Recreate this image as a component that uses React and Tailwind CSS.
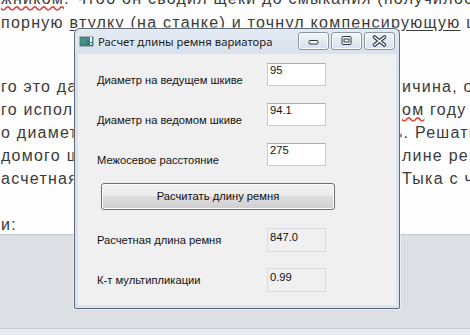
import React from "react";

const PageLine = ({ left, right, rightShift = "" }) => (
  <div className="flex h-[23px] leading-[23px] whitespace-nowrap">
    <div className="w-[401px] shrink-0 overflow-hidden">{left}</div>
    <div className={`shrink-0 ${rightShift}`}>{right}</div>
  </div>
);

const TitleButton = ({ children }) => (
  <div className="w-[31px] h-[18px] rounded-[3px] border border-[#8b97a6] bg-[linear-gradient(to_bottom,#f5f8fb,#e4eaf1_50%,#d8e0ea)] shadow-[inset_0_0_0_1px_#fbfcfe] flex items-center justify-center">
    <svg width="29" height="16" viewBox="0 0 29 16">
      {children}
    </svg>
  </div>
);

const Field = ({ label, value }) => (
  <div className="flex h-[23px]">
    <div className="w-[189px] pl-[19px] mt-[10px] leading-[14px]">{label}</div>
    <div className="w-[59px] h-[23px] bg-white border border-[#c9ccd1] border-t-[#abadb3] px-[2px] leading-[13px]">
      {value}
    </div>
  </div>
);

const Output = ({ label, value, className = "" }) => (
  <div className={`flex items-center h-[24px] ${className}`}>
    <div className="w-[189px] pl-[19px] leading-[14px]">{label}</div>
    <div className="w-[59px] h-[24px] bg-[#f0f0f0] border border-[#d9dcdf] px-[2px] pt-[2px] leading-[13px]">
      {value}
    </div>
  </div>
);

export default function App() {
  return (
    <div className="relative w-[470px] h-[335px] overflow-hidden bg-[#e9ecef]">
      {/* page text behind the window */}
      <div className="h-[235px] bg-[#fefefe] border-b border-[#c4c8cd] overflow-hidden font-['Liberation_Sans',Arial,sans-serif] text-[16px] tracking-[0.078em] text-[#3a3a3a]">
        <div className="-mt-[12px] pl-[1px]">
          <div className="h-[21px] leading-[21px] whitespace-nowrap">
            <span className="underline decoration-wavy decoration-[#e0403a]">жником</span>. Чтоб он сводил щеки до смыкания (получилось
          </div>
          <div className="mt-[3px] h-[21px] leading-[21px] whitespace-nowrap">
            порную <span className="underline underline-offset-2">втулку (на станке) и точнул компенсирующую</span> щеку
          </div>
        </div>
        <div className="mt-[42px] pl-[1px]">
          <PageLine left="го это даст нам и чем отличается величина" right="ичина, о" />
          <PageLine
            left="го используется на вариаторе в прошлом году"
            right={
              <>
                <span className="underline decoration-wavy decoration-[#e0403a]">ом</span> году п
              </>
            }
          />
          <PageLine left="о диаметру шкивов и длине ремня" right="ь. Решать" rightShift="-ml-[8px]" />
          <PageLine left="домого шкива по межосевому и длине" right="лине рем" />
          <PageLine left="асчетная длина ремня получилась" right="Тыка с ч" />
          <div className="h-[23px]" />
          <div className="h-[23px] leading-[23px]">и:</div>
        </div>
      </div>
      <div className="h-[94px] bg-[#dce0e5] border-b border-[#c3c7cc]" />

      {/* window */}
      <div className="absolute left-[74px] top-[28px] w-[326px] h-[281px] rounded-t-[6px] rounded-b-[2px] border border-[#5d6b7a] bg-[linear-gradient(to_bottom,#e3eaf2,#d7e1ec_30px,#dbe3ec)] flex flex-col shadow-[0_0_0_1px_rgba(255,255,255,0.4)]">
        <div className="h-[25px] flex items-start shrink-0">
          <div className="mt-[7px] ml-[4px]">
            <svg width="15" height="11" viewBox="0 0 15 11">
              <rect x="0.5" y="0.5" width="14" height="10" fill="#6b7885" />
              <rect x="1.5" y="1.5" width="12" height="8" fill="#2f8177" />
              <rect x="2" y="2" width="5" height="6" fill="#3f9a7c" />
              <rect x="7" y="2" width="5" height="3" fill="#4f7fa8" />
              <rect x="11" y="1" width="2" height="5" fill="#ffffff" />
              <rect x="11" y="7" width="2" height="1.5" fill="#ffffff" />
            </svg>
          </div>
          <div className="ml-[4px] mt-[4px] text-[11.3px] leading-[17px] text-[#1c1c1c] font-['Noto_Sans','Open_Sans',sans-serif]">
            Расчет длины ремня вариатора
          </div>
          <div className="ml-auto mr-[4px] mt-[3px] flex gap-[2px]">
            <TitleButton>
              <rect x="10" y="7.5" width="9" height="3.5" rx="1" fill="#ffffff" stroke="#2e3640" strokeWidth="1" />
            </TitleButton>
            <TitleButton>
              <rect x="10" y="3.5" width="9" height="8" rx="1" fill="#ffffff" stroke="#2e3640" strokeWidth="1" />
              <rect x="12" y="6" width="5" height="3" fill="none" stroke="#2e3640" strokeWidth="1" />
            </TitleButton>
            <TitleButton>
              <path d="M9.5 4 L19.5 12 M19.5 4 L9.5 12" stroke="#2e3640" strokeWidth="3.6" strokeLinecap="round" />
              <path d="M9.5 4 L19.5 12 M19.5 4 L9.5 12" stroke="#ffffff" strokeWidth="1.6" strokeLinecap="round" />
            </TitleButton>
          </div>
        </div>

        <div className="flex-1 mx-[3px] mb-[3px] bg-[#f0f0f0] pt-[9px] font-['Liberation_Sans',Tahoma,sans-serif] text-[11.2px] text-[#111]">
          <Field label="Диаметр на ведущем шкиве" value="95" />
          <div className="mt-[17px]">
            <Field label="Диаметр на ведомом шкиве" value="94.1" />
          </div>
          <div className="mt-[17px]">
            <Field label="Межосевое расстояние" value="275" />
          </div>
          <button className="mt-[17px] ml-[23px] w-[234px] h-[27px] rounded-[3px] border border-[#707070] bg-[linear-gradient(to_bottom,#f2f2f2_0%,#ebebeb_50%,#dddddd_50%,#cfcfcf_100%)] shadow-[inset_0_0_0_1px_#fcfcfc] text-[11.2px] text-[#111] font-['Liberation_Sans',Tahoma,sans-serif]">
            Расчитать длину ремня
          </button>
          <Output className="mt-[18px]" label="Расчетная длина ремня" value="847.0" />
          <Output className="mt-[16px]" label="К-т мультипликации" value="0.99" />
        </div>
      </div>
    </div>
  );
}
